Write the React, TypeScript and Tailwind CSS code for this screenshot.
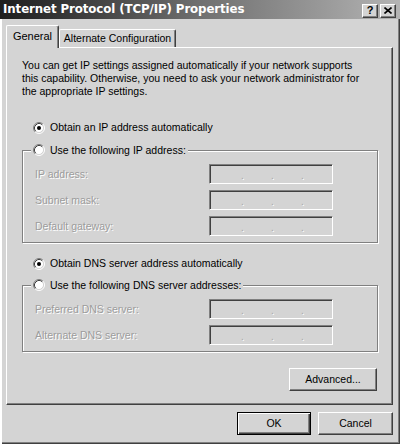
import React from 'react';

const raised =
  'border border-t-white border-l-white border-r-[#404040] border-b-[#404040] shadow-[inset_-1px_-1px_0_#808080]';

function Radio({ checked }: { checked?: boolean }) {
  return (
    <svg width="12" height="12" viewBox="0 0 12 12" className="shrink-0">
      <circle cx="6" cy="6" r="4.5" fill="#fff" />
      <path d="M2.11 9.89 A5.5 5.5 0 0 1 9.89 2.11" fill="none" stroke="#808080" strokeWidth="1" />
      <path d="M2.82 9.18 A4.5 4.5 0 0 1 9.18 2.82" fill="none" stroke="#404040" strokeWidth="1" />
      <path d="M9.89 2.11 A5.5 5.5 0 0 1 2.11 9.89" fill="none" stroke="#ffffff" strokeWidth="1" />
      <path d="M9.18 2.82 A4.5 4.5 0 0 1 2.82 9.18" fill="none" stroke="#d4d4d4" strokeWidth="1" />
      {checked && <circle cx="6" cy="6" r="2" fill="#000" />}
    </svg>
  );
}

function IpBox() {
  return (
    <div className="w-[124px] h-[20px] border border-t-[#808080] border-l-[#808080] border-r-white border-b-white shadow-[inset_1px_1px_0_#404040] flex items-end pb-[2px] text-[#a8a8a8] [text-shadow:1px_1px_0_#fff] text-[10px] leading-[10px]">
      <span className="w-[31px]" />
      <span className="w-[2px]">.</span>
      <span className="w-[28px]" />
      <span className="w-[2px]">.</span>
      <span className="w-[28px]" />
      <span className="w-[2px]">.</span>
    </div>
  );
}

function FieldRow({ label }: { label: string }) {
  return (
    <div className="flex items-center h-[20px]">
      <span className="w-[178px] pl-[4px] text-[#9c9c9c] [text-shadow:1px_1px_0_#fff]">{label}</span>
      <IpBox />
    </div>
  );
}

function Group({ title, rows }: { title: string; rows: string[] }) {
  return (
    <fieldset className="ml-[15px] w-[356px] pl-[8px] pb-[6px] border border-[#808080] shadow-[inset_1px_1px_0_#fff,1px_1px_0_#fff]">
      <legend className="px-[2px] bg-[#d4d4d4]">
        <span className="flex items-center gap-[5px] h-[14px]">
          <Radio />
          <span>{title}</span>
        </span>
      </legend>
      <div className="flex flex-col gap-[6px] mt-[7px]">
        {rows.map((r) => (
          <FieldRow key={r} label={r} />
        ))}
      </div>
    </fieldset>
  );
}

export default function App() {
  return (
    <div className="w-[400px] h-[444px] bg-[#d4d4d4] flex flex-col text-black text-[10.5px] leading-[13px] font-['Liberation_Sans',Arial,sans-serif] shadow-[inset_2px_0_0_#fff,inset_-1px_-1px_0_#404040,inset_-2px_-2px_0_#808080] overflow-hidden">
      {/* title bar */}
      <div className="h-[19px] shrink-0 flex items-center bg-gradient-to-r from-[#1e1e1e] via-[#707070] to-[#b4b4b4] pl-[3px] pr-[4px]">
        <span className="flex-1 text-white font-bold text-[11.8px] font-['DejaVu_Sans',sans-serif] tracking-[-0.1px]">
          Internet Protocol (TCP/IP) Properties
        </span>
        <div className="flex gap-[2px] mt-[2px]">
          <div className={`w-[16px] h-[14px] bg-[#d4d4d4] ${raised} flex items-center justify-center text-[11px] font-bold leading-none`}>
            ?
          </div>
          <div className={`w-[16px] h-[14px] bg-[#d4d4d4] ${raised} flex items-center justify-center`}>
            <svg width="8" height="7" viewBox="0 0 8 7">
              <path d="M0.5 0.5 L7.5 6.5 M7.5 0.5 L0.5 6.5" stroke="#000" strokeWidth="1.6" />
            </svg>
          </div>
        </div>
      </div>

      <div className="flex-1 flex flex-col pl-[6px] pr-[7px] pt-[6px]">
        {/* tabs */}
        <div className="flex items-end h-[22px] shrink-0">
          <div className="relative z-10 -mb-px w-[53px] h-[23px] bg-[#d4d4d4] border-l border-t border-white border-r border-r-[#404040] rounded-t-[2px] shadow-[inset_-1px_0_0_#808080] flex items-center justify-center text-[11px] pb-[1px]">
            General
          </div>
          <div className="w-[117px] h-[18px] border-l border-t border-white border-r border-r-[#404040] rounded-t-[2px] shadow-[inset_-1px_0_0_#808080] flex items-center justify-center">
            Alternate Configuration
          </div>
        </div>

        {/* panel */}
        <div className="h-[358px] shrink-0 border border-t-white border-l-white border-r-[#404040] border-b-[#404040] shadow-[inset_-1px_-1px_0_#808080] flex flex-col">
          <p className="ml-[15px] mt-[11px]">
            You can get IP settings assigned automatically if your network supports
            <br />
            this capability. Otherwise, you need to ask your network administrator for
            <br />
            the appropriate IP settings.
          </p>

          <div className="ml-[26px] mt-[23px] h-[13px] flex items-center gap-[5px]">
            <Radio checked />
            <span>Obtain an IP address automatically</span>
          </div>

          <div className="mt-[9px]">
            <Group title="Use the following IP address:" rows={['IP address:', 'Subnet mask:', 'Default gateway:']} />
          </div>

          <div className="ml-[26px] mt-[14px] h-[13px] flex items-center gap-[5px]">
            <Radio checked />
            <span>Obtain DNS server address automatically</span>
          </div>

          <div className="mt-[8px]">
            <Group title="Use the following DNS server addresses:" rows={['Preferred DNS server:', 'Alternate DNS server:']} />
          </div>

          <div className="flex justify-end mr-[15px] mt-[16px]">
            <button className={`w-[88px] h-[23px] ${raised} text-[10.5px]`}>Advanced...</button>
          </div>
        </div>

        {/* bottom buttons */}
        <div className="flex justify-end gap-[7px] mt-[7px]">
          <button className="w-[74px] h-[23px] border border-black shadow-[inset_1px_1px_0_#fff,inset_-1px_-1px_0_#404040,inset_-2px_-2px_0_#808080]">
            OK
          </button>
          <button className={`w-[75px] h-[23px] ${raised}`}>Cancel</button>
        </div>
      </div>
    </div>
  );
}
